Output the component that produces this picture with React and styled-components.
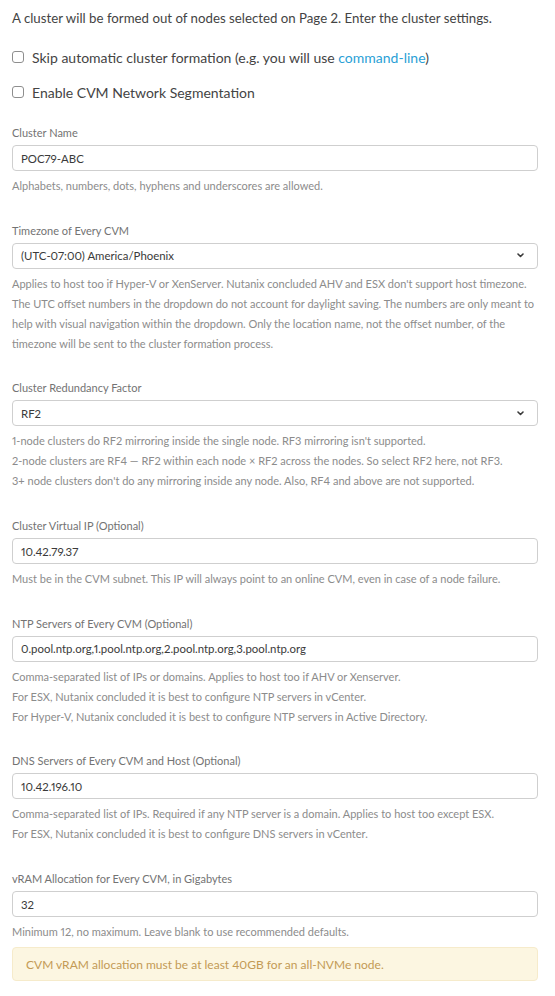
import React from "react";
import styled, { createGlobalStyle } from "styled-components";

const GlobalStyle = createGlobalStyle`
  body {
    margin: 0;
    background: #ffffff;
    font-family: "Lato", "Open Sans", Arial, sans-serif;
    color: #333333;
    font-variant-numeric: proportional-nums;
  }
`;

const fields = [
  {
    label: "Cluster Name",
    value: "POC79-ABC",
    help: ["Alphabets, numbers, dots, hyphens and underscores are allowed."],
  },
  {
    label: "Timezone of Every CVM",
    value: "(UTC-07:00) America/Phoenix",
    select: true,
    help: [
      "Applies to host too if Hyper-V or XenServer. Nutanix concluded AHV and ESX don't support host timezone.",
      "The UTC offset numbers in the dropdown do not account for daylight saving. The numbers are only meant to",
      "help with visual navigation within the dropdown. Only the location name, not the offset number, of the",
      "timezone will be sent to the cluster formation process.",
    ],
  },
  {
    label: "Cluster Redundancy Factor",
    value: "RF2",
    select: true,
    help: [
      "1-node clusters do RF2 mirroring inside the single node. RF3 mirroring isn't supported.",
      "2-node clusters are RF4 \u2014 RF2 within each node \u00d7 RF2 across the nodes. So select RF2 here, not RF3.",
      "3+ node clusters don't do any mirroring inside any node. Also, RF4 and above are not supported.",
    ],
  },
  {
    label: "Cluster Virtual IP (Optional)",
    value: "10.42.79.37",
    help: [
      "Must be in the CVM subnet. This IP will always point to an online CVM, even in case of a node failure.",
    ],
  },
  {
    label: "NTP Servers of Every CVM (Optional)",
    value: "0.pool.ntp.org,1.pool.ntp.org,2.pool.ntp.org,3.pool.ntp.org",
    help: [
      "Comma-separated list of IPs or domains. Applies to host too if AHV or Xenserver.",
      "For ESX, Nutanix concluded it is best to configure NTP servers in vCenter.",
      "For Hyper-V, Nutanix concluded it is best to configure NTP servers in Active Directory.",
    ],
  },
  {
    label: "DNS Servers of Every CVM and Host (Optional)",
    value: "10.42.196.10",
    help: [
      "Comma-separated list of IPs. Required if any NTP server is a domain. Applies to host too except ESX.",
      "For ESX, Nutanix concluded it is best to configure DNS servers in vCenter.",
    ],
  },
  {
    label: "vRAM Allocation for Every CVM, in Gigabytes",
    value: "32",
    help: ["Minimum 12, no maximum. Leave blank to use recommended defaults."],
    warning: "CVM vRAM allocation must be at least 40GB for an all-NVMe node.",
  },
];

const Chevron = () => (
  <svg width="7" height="5" viewBox="0 0 7 5">
    <path
      d="M1 1 L3.5 3.5 L6 1"
      fill="none"
      stroke="#3a3a3a"
      strokeWidth="1.6"
      strokeLinecap="round"
      strokeLinejoin="round"
    />
  </svg>
);

const App = () => {
  return (
    <Page>
      <GlobalStyle />
      <Intro>
        A cluster will be formed out of nodes selected on Page 2. Enter the
        cluster settings.
      </Intro>
      <CheckRow first>
        <Box />
        <span>
          Skip automatic cluster formation (e.g. you will use{" "}
          <LinkText>command-line</LinkText>)
        </span>
      </CheckRow>
      <CheckRow>
        <Box />
        <span>Enable CVM Network Segmentation</span>
      </CheckRow>

      <Fields>
        {fields.map((f) => (
          <Field key={f.label}>
            <Label>{f.label}</Label>
            <InputBox>
              <span>{f.value}</span>
              {f.select && <Chevron />}
            </InputBox>
            <Help>
              {f.help.map((line) => (
                <div key={line}>{line}</div>
              ))}
            </Help>
            {f.warning && <Warning>{f.warning}</Warning>}
          </Field>
        ))}
      </Fields>
    </Page>
  );
};

export default App;

const Page = styled.div`
  padding: 8px 17px 20px 12px;
  width: 526px;
`;

const Intro = styled.div`
  font-size: 13.25px;
  line-height: 20px;
  color: #444444;
`;

const CheckRow = styled.label`
  display: flex;
  align-items: center;
  gap: 8px;
  height: 20px;
  margin-top: ${(props) => (props.first ? "19px" : "15px")};
  font-size: 14px;
  color: #444444;
`;

const Box = styled.span`
  width: 12px;
  height: 12px;
  border: 1px solid #8e8e8e;
  border-radius: 3px;
  box-sizing: border-box;
  flex-shrink: 0;
`;

const LinkText = styled.span`
  color: #2a9fd6;
`;

const Fields = styled.div`
  margin-top: 23px;
  display: flex;
  flex-direction: column;
  gap: 26.7px;
`;

const Field = styled.div`
  display: flex;
  flex-direction: column;
`;

const Label = styled.div`
  font-size: 11px;
  line-height: 16px;
  color: #737373;
  margin-bottom: 4px;
`;

const InputBox = styled.div`
  height: 26px;
  box-sizing: border-box;
  border: 1px solid #cfcfcf;
  border-radius: 4px;
  padding: 0 13px 0 8px;
  display: flex;
  align-items: center;
  justify-content: space-between;
  font-size: 11.4px;
  color: #3a3a3a;
`;

const Help = styled.div`
  padding-top: 5px;
  font-size: 11px;
  line-height: 20px;
  color: #8c8c8c;
`;

const Warning = styled.div`
  margin-top: 5px;
  height: 34px;
  box-sizing: border-box;
  display: flex;
  align-items: center;
  padding: 0 13px;
  background: #fcf6e1;
  border: 1px solid #f6ebcb;
  border-radius: 4px;
  font-size: 12px;
  color: #c39a55;
`;
